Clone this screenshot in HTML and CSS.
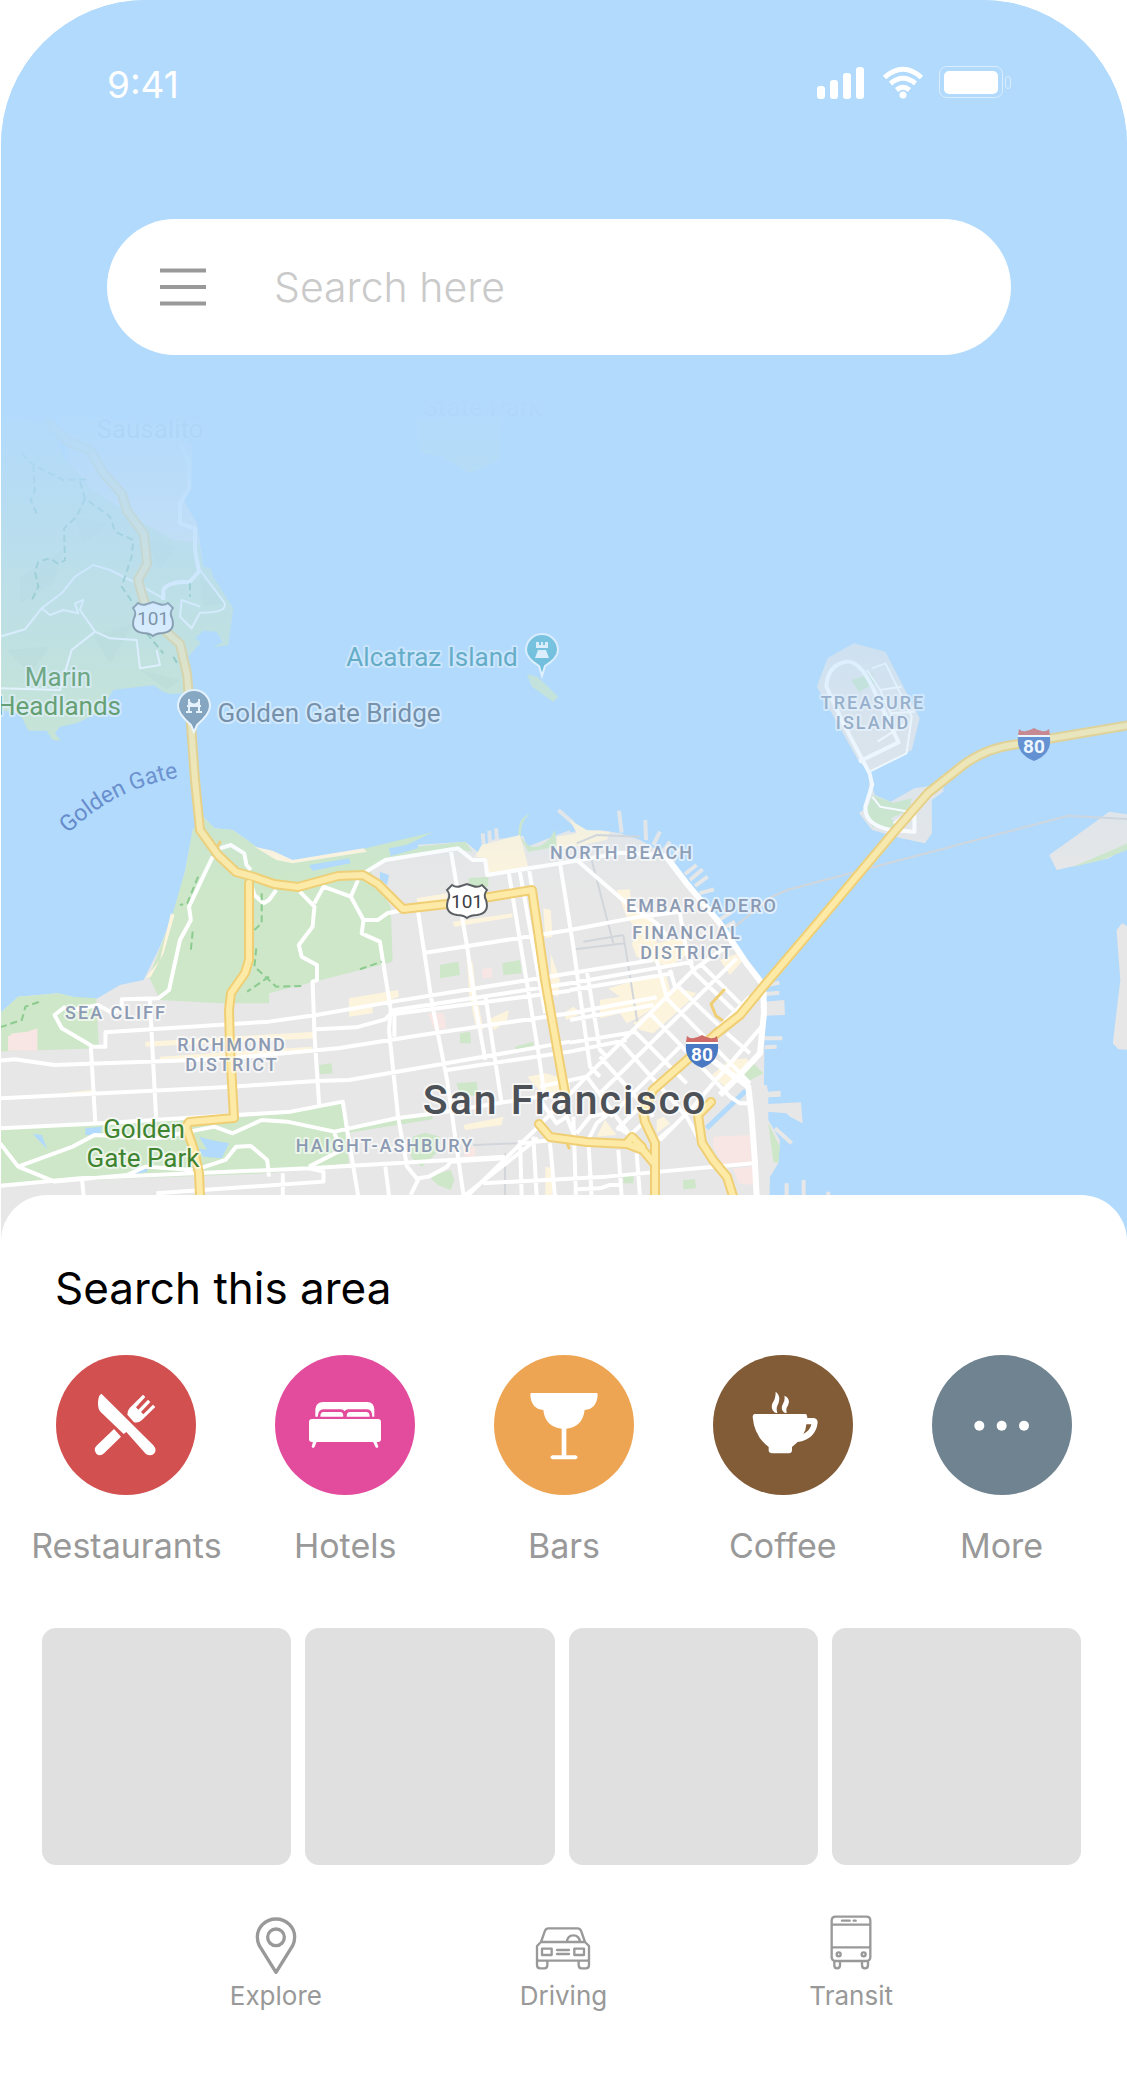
FILE: index.html
```html
<!DOCTYPE html>
<html lang="en">
<head>
<meta charset="utf-8">
<meta name="viewport" content="width=device-width, initial-scale=1">
<title>Maps</title>
<link rel="stylesheet" href="styles.css">
</head>
<body>
<main class="phone">
  <section class="stage">
    <svg class="map" viewBox="1 0 1126 1245" role="img" aria-label="Map of San Francisco">
      <defs>
        <linearGradient id="haze" x1="0" y1="0" x2="0" y2="1">
          <stop offset="0" stop-color="#b2dafc"/>
          <stop offset=".1" stop-color="#b2dafc" stop-opacity=".93"/>
          <stop offset=".42" stop-color="#b2dafc" stop-opacity=".58"/>
          <stop offset=".65" stop-color="#b2dafc" stop-opacity=".3"/>
          <stop offset="1" stop-color="#b2dafc" stop-opacity="0"/>
        </linearGradient>
        <symbol id="us-route" viewBox="-22 -18 44 36" overflow="visible">
          <path d="M-15-15Q-11-12-6-14L0-16L6-14Q11-12 15-15L20-10Q16-5 19 0Q23 13 10 15Q4 15 0 18Q-4 15-10 15Q-23 13-19 0Q-16-5-20-10Z" fill="#fff" stroke="#5b5f63" stroke-width="2"/>
        </symbol>
        <symbol id="interstate" viewBox="-18 -18 36 36" overflow="visible">
          <path d="M-15-16Q-12-13-8-14Q-3-15 0-17Q3-15 8-14Q12-13 15-16L16-10H-16Z" fill="#cf6b69"/>
          <path d="M-16-8H16Q18 9 0 16Q-18 9-16-8Z" fill="#4a79c4"/>
          <path d="M-16-10H16V-8H-16Z" fill="#fff"/>
        </symbol>
        <path id="strait" d="M68 834Q112 790 176 778L220 770"/>
      </defs>

      <!-- land -->
      <g class="land">
        <path transform="translate(0 780) scale(.3635 .3333)" d="M0 700L50 650L160 640L200 650L260 660L330 615L395 600L440 500L480 390L510 270L530 150L560 110L590 145L640 150L680 180L710 205L800 245L930 225L1010 210L1140 195L1280 185L1330 230L1345 180L1440 168L1450 200L1568 150V1400H0Z"/>
        <path transform="translate(440 800) scale(.3333)" d="M270 150L350 105L400 95L480 90L540 100L600 120L680 165L720 220L830 370L880 440L960 540L975 560L972 850L985 960L1020 1020L1015 1090L990 1130L985 1340H270ZM972 605L1033 600L1035 645L972 647ZM930 858L980 855L985 875L1022 872V890L985 892V912L1083 907L1088 970L1050 950L1040 940L985 935V990H930Z"/>
        <path transform="translate(300 580) scale(.5274 .3333)" d="M1050 190L1110 215L1175 415L1160 510L1080 575L1060 545L980 320L1000 235ZM1080 600L1090 645L1120 665L1165 625L1220 612V635L1198 660V760L1185 790L1140 775L1085 750L1060 700L1075 680Z"/>
        <path transform="translate(540 780) scale(.3744 .3333)" d="M1520 95L1580 105V190L1520 235L1380 270L1360 225L1460 145ZM1555 430L1580 445V810L1545 808L1530 790L1550 600L1540 450Z"/>
        <path d="M60 420L175 430L193 450L190 490L184 505L197 527L203 567L130 540L70 470Z" transform="translate(0 -4)"/>
      </g>
      <g class="piers" transform="translate(440 800) scale(.3333)">
        <path d="M355 30L400 70M537 32L545 98M616 60L618 120M660 95L640 135M690 125L668 155M715 145L700 185M735 222L770 195M750 240L788 208M765 258L803 230M778 280L822 268M830 365L872 338M850 385L885 365M960 560L1018 548M970 583L1018 578M970 715H1027M975 742L1010 740M1005 985L1055 1030M1091 1140V1195M1040 1150V1195M128 100L132 140M148 92L150 140M168 85L172 130M1165 1175V1195"/>
      </g>

      <!-- parks and open space -->
      <g class="park">
        <path transform="translate(0 390) scale(.3333)" d="M0 80L150 100L190 200L280 300L430 400L520 450L597 460L610 530L632 535L640 560L700 655L685 765L640 772L668 755L650 725L610 722L585 745L603 757L565 800L575 840L555 910L510 912L490 905L460 885L340 900L300 965L230 1000L180 1010L165 1030L182 1052L158 1050L140 1022L85 1022L60 970L0 960ZM1250 90L1500 70V210L1410 250L1330 200L1260 190Z"/>
        <path transform="translate(0 780) scale(.3635 .3333)" d="M560 110L590 145L640 150L680 180L710 205L800 245L930 225L1080 185L1190 157L1100 205L1280 185L1300 215L1250 205L1060 240L1020 275L1075 380L1080 545L740 640V670H610L440 660L410 590L470 420L510 270L530 150ZM0 700L50 650L160 640L200 650L265 655L272 805L0 815ZM0 1047L300 1030L640 1015L780 1000L940 968L960 1150L740 1180L0 1210ZM950 1045L1190 1000V1018L950 1060ZM1135 1070L1170 1058L1210 1070L1200 1120L1160 1160L1130 1130ZM1180 1190L1240 1170L1250 1200L1240 1230L1205 1215ZM878 855L912 850L915 880L880 883Z"/>
        <path transform="translate(440 800) scale(.3333)" d="M265 155L235 105Q235 50 270 43Q242 60 242 110Q280 170 330 115L345 90L350 140ZM0 495L55 485L60 525L0 535ZM187 490L240 480L245 520L190 525ZM60 700L90 695L93 730H60ZM225 740L280 725V745L225 748ZM50 850L110 845L115 885L60 890ZM85 235L145 230V260L90 262ZM730 1140L765 1138L768 1165L730 1168ZM550 1130L580 1125V1150H550ZM905 830L940 790L970 820L920 845ZM985 970L1000 1000L1020 1040L1015 1090L1000 1085Z"/>
        <path transform="translate(300 580) scale(.5274 .3333)" d="M1045 300L1085 280L1090 310L1060 335ZM1085 645L1125 668L1160 655L1155 690L1120 715L1140 745L1085 740L1075 690ZM430 282L450 290L490 350L480 365L440 320Z"/>
        <path transform="translate(540 780) scale(.3744 .3333)" d="M1568 190L1540 205L1420 262L1500 240L1568 210Z"/>
      </g>
      <g class="relief" transform="translate(0 390) scale(.3333)">
        <path d="M60 560L190 480L160 580L60 640ZM280 740L400 700L330 820ZM430 440L530 470L480 540ZM220 380L330 400L250 460ZM20 780L150 770L90 850ZM420 840L540 870L500 900ZM600 560L680 640L610 650Z"/>
      </g>
      <path class="lake" transform="translate(0 780) scale(.3635 .3333)" d="M850 255L960 235L965 250L860 272ZM1070 205L1150 188V205L1075 228ZM1045 275L1070 285L1065 315L1045 300ZM90 1062L115 1065L130 1108ZM235 1045L280 1040L275 1065H235ZM548 1070L580 1080L630 1090L610 1135L560 1130L545 1105L570 1110ZM370 1165L405 1155V1175L370 1182Z"/>
      <path class="lake-line" transform="translate(440 800) scale(.3333)" d="M800 985L918 872"/>

      <!-- shopping streets, beaches, hospitals -->
      <g class="commerce">
        <path transform="translate(0 780) scale(.3635 .3333)" d="M400 595L440 540L470 400L480 405L450 520L415 590ZM700 200L750 212L805 240L1000 205L1010 215L805 250L760 240ZM400 785L870 755V775L400 800ZM440 830L860 800V815L440 845ZM960 655L1095 630L1097 650L1025 680V700L960 710ZM1145 355L1230 340V360L1150 370ZM1245 425L1410 400V412L1250 440ZM1285 540L1300 545L1310 640L1330 750L1310 745L1290 640ZM1340 720L1400 690L1395 720L1360 750ZM1495 385L1515 390L1520 470L1500 475ZM1515 520L1540 600L1535 650L1515 640ZM1275 1035L1385 1010L1380 1035L1280 1050ZM1450 890L1500 880L1568 900V960L1500 950ZM1500 1160L1520 1165V1245H1500ZM185 938L250 930V942L185 948Z"/>
        <path transform="translate(440 800) scale(.3333)" d="M125 135L240 105L250 140L265 205L145 225L140 175L105 170ZM350 110L410 100L390 60L440 90L510 95L500 120L350 150ZM530 270L570 268L575 330L640 350L650 430L740 410L745 460L690 500L590 470L575 430L600 400L560 350ZM505 565L590 540L680 530L695 590L600 650L560 670L540 640L480 655V600L540 590ZM700 560L770 580L740 610L640 700L600 690L580 670L680 600ZM840 480L890 462L905 485L870 525ZM815 825L870 780L920 775L930 795L855 860ZM370 640L400 620L425 640L380 660ZM470 1010L495 960L530 1005ZM650 960L670 950L690 970L650 1000Z"/>
      </g>
      <g class="hospital">
        <path transform="translate(0 780) scale(.3635 .3333)" d="M22 770L35 760L75 755L103 745V812H22ZM1325 568L1352 562L1355 592L1328 595ZM1178 700L1220 698L1228 745L1195 750ZM1275 1105L1308 1100L1308 1130L1278 1132Z"/>
        <path transform="translate(440 800) scale(.3333)" d="M820 1010L930 1005L935 1090L850 1095L820 1040ZM880 1105L940 1100V1155L895 1150Z"/>
      </g>
      <g class="rail">
        <path transform="translate(440 800) scale(.3333)" d="M455 180L520 430M550 405L592 665M430 425L550 405M405 448L555 430M410 130L470 105L600 110M100 1035L230 1030M195 1060V1190"/>
        <path transform="translate(540 780) scale(.3744 .3333)" d="M520 440L620 350L660 330L1350 125L1410 107L1580 118"/>
      </g>

      <!-- streets -->
      <g class="street" transform="translate(0 780) scale(.3635 .3333)">
        <path d="M0 842L40 838L150 855L480 842L630 835L930 805L1160 765L1568 700M0 955L640 920L870 903L960 900L1200 855L1568 785M0 1045L280 1030L500 1015L650 1005L800 995L943 965L955 1050L985 1245M180 680L150 705L170 745L240 790L255 800H290V757L740 725L870 705L1080 665L1568 580M250 800L262 1025M412 655L430 1025M200 690L270 675L310 700L335 685V658L435 655L465 630L495 480L525 420L520 380L550 310L585 230M605 205L635 195L672 220L678 255L690 270M690 310L700 345L725 370L740 360L760 330M825 335L865 380L860 440L822 495L830 530L872 555V600L860 605L865 760L878 975M865 370L890 320L965 350L985 300M965 350L1000 420L995 460L1045 485L1075 690L1070 750L1095 1010L1120 1160L1150 1200L1130 1245M1000 420L1040 420L1065 400L1110 390M985 290L1060 240L1260 205L1300 240H1335L1340 285L1568 245M1240 210L1285 500L1310 690L1335 840M1150 395L1190 680L1230 900L1275 1245M1170 518L1568 450M870 748L980 742L1060 718L1085 690L1568 610M1080 703L1568 632M0 1218L220 1195L850 1165L1390 1130M225 1190L230 1245M520 1055L590 1040L640 1060L720 1020L790 1025L920 1055L1090 1015L1200 1000L1568 935M0 1090L50 1160L150 1205L350 1185L400 1160L530 1170M50 1160L200 1100L260 1065L430 1075L520 1055M550 1165L620 1140L650 1100L690 1098L735 1140L740 1190M850 1160L940 1110L920 1060M850 1165L890 1175V1205L430 1240M1280 1245L1480 1075M1335 645L1380 970M1400 280L1480 810L1500 960M1430 275L1500 700M1455 265L1500 560M1230 870L1568 815M1060 1160L1070 1245M778 1180V1245M1150 1195L1180 1190L1230 1160L1240 1145L1390 1135M1085 690V770"/>
      </g>
      <g class="street" transform="translate(440 800) scale(.3333)">
        <path d="M390 185L420 180L540 158L680 165M410 180L560 310L650 370L690 420M390 390L600 350L720 335M390 520L640 480M390 550L760 485M390 570L700 520M390 640L650 592M390 660L640 615M390 728L580 697M390 755L560 720M300 860L440 830M360 190L400 440L450 800L480 830M440 510L480 750L500 770M720 340L740 460L760 510M650 480L680 590M690 510L705 560M80 1190L295 980L440 830L580 690L760 510L860 440M475 885L890 475M510 950L720 740M530 990L930 590M660 1020L760 920L965 680M440 830L570 1005M480 770L640 950M540 725L740 950L800 1060M580 690L740 850M630 640L870 890L900 910H930M680 595L930 850M715 560L840 680M755 510L880 630M785 495L900 610M860 700L930 760M240 1020L245 1190M280 1010L290 1190M330 1030L345 1190M400 950L408 1190M445 1020L455 1190M535 1050L545 1190M590 1060L600 1190M240 1030L340 1020M130 1150L500 1130L660 1115L940 1090M410 1168L480 1165L510 1155H540M300 900L350 970L380 950L400 1000M410 1000L450 950L500 940M440 1030L470 970L520 930M530 980L570 1005L620 960M640 1030L700 980"/>
        <path class="wide" d="M675 165L740 250L840 370L920 490L970 555L972 640L960 760L890 835L840 885M790 760L925 860L935 950L945 1090L950 1190"/>
      </g>
      <g class="street thin" transform="translate(0 390) scale(.3333)">
        <path d="M0 740L75 718L125 655L185 610L225 560L280 525L330 540L410 580L490 625M125 655L150 675L190 660L235 670L225 640L250 630L240 660L275 710L285 725L330 745L410 750L420 835L480 825L470 780M285 725L215 780L200 830L180 900L0 895M600 540L675 640Q680 670 600 668L575 715L540 680L545 630L600 650"/>
        <path class="mid" d="M490 630L490 600Q500 575 570 575L597 545L585 480L585 415L540 400V340L568 295V215L540 160"/>
      </g>
      <g class="street thin" transform="translate(300 580) scale(.5274 .3333)">
        <path d="M1085 265L1110 250L1160 410L1150 520L1080 575M1075 270L1100 330L1140 320M1100 330L1120 400L1165 395M1095 485L1150 430M1085 650L1100 680L1155 695L1125 730"/>
        <path class="mid" d="M1060 545L1135 487L1085 320Q1060 240 1035 245Q1000 255 998 320L1030 430L1080 580L1085 615L1072 680Q1070 735 1120 750L1165 755V700"/>
      </g>
      <g class="trail" transform="translate(0 390) scale(.3333)">
        <path d="M65 190L100 225L190 270L265 268M100 225L105 300L92 330L112 375M240 275L255 325L330 380L345 425L400 450L395 500L365 590L400 640M255 325L230 380L192 415L195 510L175 522L150 505L115 515L105 545L115 590L95 632M440 730L490 790M520 800L535 825M570 580V620"/>
      </g>
      <g class="trail green" transform="translate(0 780) scale(.3635 .3333)">
        <path d="M545 290L515 370L495 375M530 455L525 510M720 340V430L690 460M705 505L700 560L760 620L830 618M740 590L680 635M0 742L60 720L70 680L110 665M990 568L1050 545"/>
      </g>

      <!-- highways: casing, then surface -->
      <g id="highways">
        <g class="casing">
          <path id="hw-101" d="M50 424L67 441L90 450L104 474L122 494L127 511L144 534L147 564L138 580L144 601L153 620L180 644L187 674L190 710L195 780L200 830L218 855L236 872L254 877L274 884L298 887L338 876L363 875L378 884L403 909L447 904L532 890L545 980L565 1093"/>
          <path id="hw-park" d="M249 883V960L245 973L231 993L229 1010L230 1047L234 1118L189 1122L186 1127L194 1150L199 1173L200 1196"/>
          <path id="hw-80" d="M655 1196V1143L645 1122L643 1112L653 1090L687 1060L717 1033L740 1015L763 987L820 920L894 832L928 793L962 766Q984 749 1012 745L1130 725"/>
          <path id="hw-central" d="M539 1124L550 1137L587 1142L627 1144L643 1150L653 1162M627 1143L632 1137L642 1147"/>
          <path id="hw-280" d="M711 1102L698 1115L702 1143L713 1160L727 1177L733 1196"/>
          <path class="ramp" d="M724 990L711 1004L716 1016L722 1020M217 848L220 842M565 1138L569 1148"/>
        </g>
        <g class="surface">
          <use href="#hw-101"/><use href="#hw-park"/><use href="#hw-80"/><use href="#hw-central"/><use href="#hw-280"/>
        </g>
      </g>

      <!-- markers -->
      <path d="M194 732L191 725Q178 714 178 706A16 16 0 0 1 210 706Q210 714 197 725Z" fill="#6f8ca3" stroke="#fff" stroke-width="2"/>
      <path d="M186 712H192M196 712H202M189 699V712M199 699V712M187 706H201M189 702Q194 707 199 702" fill="none" stroke="#fff" stroke-width="2"/>
      <path d="M542 676L539 666Q526 658 526 650A16 16 0 0 1 558 650Q558 658 545 666Z" fill="#3fabc4" stroke="#fff" stroke-width="2"/>
      <path d="M536 642H539V645H541V642H543V645H545V642H548V648H536ZM538 650H546L549 658H535Z" fill="#fff"/>
      <use href="#us-route" x="131" y="600" width="44" height="36"/>
      <use href="#us-route" x="445" y="882" width="44" height="36"/>
      <use href="#interstate" x="684" y="1034" width="36" height="36"/>
      <use href="#interstate" x="1016" y="727" width="36" height="36"/>
      <g class="shield">
        <text x="153" y="625">101</text>
        <text x="467" y="908">101</text>
        <text class="on-blue" x="702" y="1061">80</text>
        <text class="on-blue" x="1034" y="753">80</text>
      </g>

      <!-- place names -->
      <g class="place">
        <text class="town" x="150" y="438">Sausalito</text>
        <text class="town" x="482" y="416">State Park</text>
        <text class="nature" x="58" y="686">Marin</text>
        <text class="nature" x="59" y="715">Headlands</text>
        <text class="sight" x="432" y="666">Alcatraz Island</text>
        <text class="bridge" x="329" y="722">Golden Gate Bridge</text>
        <text class="water"><textPath href="#strait">Golden Gate</textPath></text>
        <text class="nature" x="144" y="1138">Golden</text>
        <text class="nature" x="143" y="1167">Gate Park</text>
      </g>
      <g class="district">
        <text x="873" y="709">TREASURE</text>
        <text x="873" y="729">ISLAND</text>
        <text x="622" y="859">NORTH BEACH</text>
        <text x="702" y="912">EMBARCADERO</text>
        <text x="687" y="939">FINANCIAL</text>
        <text x="687" y="959">DISTRICT</text>
        <text x="116" y="1019">SEA CLIFF</text>
        <text x="232" y="1051">RICHMOND</text>
        <text x="232" y="1071">DISTRICT</text>
        <text x="385" y="1152">HAIGHT-ASHBURY</text>
      </g>
      <text class="city" x="565" y="1114">San Francisco</text>
      <rect x="0" y="0" width="1128" height="395" fill="#b2dafc"/>
      <rect x="0" y="394" width="1128" height="500" fill="url(#haze)"/>
    </svg>

    <header class="top">
      <div class="status">
        <time class="clock">9:41</time>
        <svg class="signals" viewBox="0 0 200 36" aria-hidden="true">
          <g fill="#fff">
            <rect x="3" y="21" width="8" height="13" rx="3"/><rect x="16" y="15" width="8" height="19" rx="3"/><rect x="29" y="8" width="8" height="26" rx="3"/><rect x="42" y="2" width="8" height="32" rx="3"/>
            <circle cx="89" cy="30" r="3.5"/><rect x="130" y="6" width="54" height="23" rx="5"/>
          </g>
          <g fill="none" stroke="#fff" stroke-width="5">
            <path d="M70.500 12.500Q89-4 107.500 12.500M76.500 18.500Q89 8 101.500 18.500M82.500 25Q89 19.500 95.500 25"/>
          </g>
          <g fill="none" stroke="#fff" stroke-opacity=".5"><rect x="125.500" y="1.500" width="63" height="31" rx="7"/><rect x="191.500" y="11.500" width="5" height="12" rx="2.500"/></g>
        </svg>
      </div>
      <form class="search">
        <button class="menu" type="button" aria-label="Menu">
          <svg viewBox="0 0 46 38" aria-hidden="true"><path d="M0 2.500H46M0 19H46M0 35.500H46" stroke="#999" stroke-width="4"/></svg>
        </button>
        <input class="query" type="search" placeholder="Search here" aria-label="Search here">
      </form>
    </header>
  </section>

  <section class="sheet">
    <h1 class="title">Search this area</h1>
    <div class="categories">
      <button class="category" type="button">
        <svg class="disc red" viewBox="-12 15 420 420" aria-hidden="true"><path d="M114 155Q116 132 125 132L280 286Q292 300 282 311Q270 321 257 311L199 246L191 252L122 186Q113 178 114 155ZM162 237L183 260L133 309Q120 321 109 311Q98 297 111 286ZM249 134L256 141L228 172L235 179L264 149L271 156L243 186L250 193L279 164L286 171L246 210Q236 220 222 217L202 194Q202 182 209 174Z"/></svg>
        <span>Restaurants</span>
      </button>
      <button class="category" type="button">
        <svg class="disc pink" viewBox="653 15 420 420" aria-hidden="true"><path d="M774 200V178Q776 157 797 156H930Q950 157 951 178V200H945Q944 178 930 178H873Q865 178 862 184Q859 178 850 178H798Q783 178 781 200ZM789 200Q789 186 798 186H850Q858 187 858 200ZM868 200Q868 187 876 186H928Q937 187 937 200ZM767 275H778L772 290Q767 297 763 290ZM947 275H958L963 290Q959 297 954 290Z"/><rect x="755" y="207" width="216" height="69" rx="9"/></svg>
        <span>Hotels</span>
      </button>
      <button class="category" type="button">
        <svg class="disc orange" viewBox="1313 15 420 420" aria-hidden="true"><path d="M1425 129H1621Q1624 130 1624 134Q1622 176 1585 180Q1578 232 1530 236V316H1558Q1570 322 1558 328H1488Q1476 322 1488 316H1516V236Q1466 230 1461 180Q1424 176 1422 134Q1422 130 1425 129Z"/></svg>
        <span>Bars</span>
      </button>
      <button class="category" type="button">
        <svg class="disc brown" viewBox="0 0 420 420" aria-hidden="true"><path fill-rule="evenodd" d="M124 177H278Q282 178 283 189H302Q314 191 314 203Q308 252 254 261L237 276V288Q235 295 228 295H176Q168 294 167 288V276Q124 244 119 186Q119 178 124 177ZM280 208H295Q292 226 271 237Q279 226 280 208ZM188 110Q199 118 199 132Q198 144 193 152Q189 162 193 173Q186 176 179 166Q173 152 180 142Q188 130 188 110ZM214 122Q227 126 228 140Q227 150 221 158Q219 166 221 173Q213 176 208 166Q204 156 210 146Q217 136 214 122Z"/></svg>
        <span>Coffee</span>
      </button>
      <button class="category" type="button">
        <svg class="disc slate" viewBox="0 0 420 420" aria-hidden="true"><circle cx="142" cy="212" r="15"/><circle cx="209" cy="212" r="15"/><circle cx="276" cy="212" r="15"/></svg>
        <span>More</span>
      </button>
    </div>

    <div class="cards">
      <div class="card"></div>
      <div class="card"></div>
      <div class="card"></div>
      <div class="card"></div>
    </div>

    <nav class="tabs">
      <a class="tab" href="#explore">
        <svg viewBox="48 45 180 180" aria-hidden="true"><g stroke-width="10"><path d="M138 217L88 137Q82 125 82 111A56 54 0 0 1 194 111Q194 125 188 137Z"/><circle cx="138" cy="112" r="25"/></g></svg>
        <span>Explore</span>
      </a>
      <a class="tab" href="#driving">
        <svg viewBox="906 45 180 180" aria-hidden="true"><g stroke-width="7"><path d="M930 126L942 92Q945 85 952 85H1040Q1047 85 1050 92L1062 126M930 126H1062L1074 138V176Q1074 182 1067 182H925Q918 182 918 176V138ZM918 178V196Q918 205 928 205H940Q949 205 949 196V183M1074 178V196Q1074 205 1064 205H1052Q1043 205 1043 196V183M1008 126Q1009 106 1027 106Q1045 106 1047 126M933 146H962V165H933ZM1030 146H1059V165H1030ZM978 150H1014M978 162H1014"/></g></svg>
        <span>Driving</span>
      </a>
      <a class="tab" href="#transit">
        <svg viewBox="0 0 180 180" aria-hidden="true"><g stroke-width="7"><path d="M44 5H136Q148 5 148 17V126Q148 138 136 138H44Q32 138 32 126V17Q32 5 44 5ZM32 29H148M32 97H148M40 138V151Q40 160 48 160Q57 160 57 151V138M123 138V151Q123 160 132 160Q141 160 141 151V138M63 17H86M98 17H104"/><circle cx="53" cy="118" r="6"/><circle cx="128" cy="118" r="6"/></g></svg>
        <span>Transit</span>
      </a>
    </nav>
  </section>
</main>
</body>
</html>
```
FILE: styles.css
```css
* { box-sizing: border-box; }

body {
  margin: 0;
  background: #fff;
  font-family: Inter, "Liberation Sans", sans-serif;
}

button, input { font: inherit; border: 0; background: none; padding: 0; margin: 0; }

.phone { padding-left: 1px; }

.stage {
  display: grid;
  overflow: hidden;
  border-radius: 145px 145px 0 0;
  background: #b2dafc;
}
.map, .top { grid-area: 1 / 1; }
.map { display: block; width: 100%; height: auto; }
.map text { font-family: Roboto, "Liberation Sans", sans-serif; text-anchor: middle; }

.land { fill: #e7e7e7; }
.park { fill: #cde7c8; }
.relief { fill: #bfdcc0; opacity: .5; }
.lake { fill: #b2dafc; }
.commerce { fill: #fdf4dd; }
.hospital { fill: #f8e6e4; }
.map path { vector-effect: non-scaling-stroke; }
.piers { fill: none; stroke: #e7e7e7; stroke-width: 4; }
.lake-line { fill: none; stroke: #b2dafc; stroke-width: 5; }
.rail { fill: none; stroke: #d2d6da; stroke-width: 2; }
.street { fill: none; stroke: #fff; stroke-width: 4; stroke-linejoin: round; }
.street .wide { stroke-width: 6; }
.thin { stroke-width: 2; }
.thin .mid { stroke-width: 4; }
.trail { fill: none; stroke: #7dbd9a; stroke-width: 2; stroke-dasharray: 7 4; }
.trail.green { stroke: #8ccb8f; }
.casing, .surface { fill: none; stroke-linecap: round; stroke-linejoin: round; }
.casing { stroke: #f0cf74; stroke-width: 10; }
.casing .ramp { stroke-width: 3; }
.surface use { stroke: #fdeaa6; stroke-width: 6; }
#hw-101, #hw-park, #hw-80, #hw-central, #hw-280 { stroke-width: inherit; }

.place text, .district text, .city { paint-order: stroke; stroke: rgba(255, 255, 255, .6); stroke-width: 4; stroke-linejoin: round; }
.place { font-size: 26px; }
.town { fill: #6f7f96; }
.nature { fill: #3f8430; }
.sight { fill: #24889c; }
.bridge { fill: #5a6f86; }
.place .water { font-size: 23px; fill: #5a80c4; stroke: none; text-anchor: start; }
.district { font-size: 18px; font-weight: 500; fill: #8b9ab2; letter-spacing: 2px; }
.city { font-size: 41px; font-weight: 500; fill: #4c5157; letter-spacing: 2px; }
.shield { font-size: 19px; fill: #3c4043; }
.shield .on-blue { fill: #fff; font-weight: 700; }

.top { padding: 60px 116px 0 106px; }
.status { display: flex; justify-content: space-between; align-items: center; height: 50px; margin-right: -3px; color: #fff; }
.clock { font-size: 37px; font-weight: 400; line-height: 50px; }
.signals { width: 200px; height: 36px; margin-bottom: 4px; }

.search {
  display: flex;
  align-items: center;
  gap: 68px;
  height: 136px;
  margin-top: 109px;
  padding: 0 53px;
  border-radius: 68px;
  background: #fff;
}
.menu { width: 46px; height: 38px; }
.menu svg { display: block; width: 46px; height: 38px; }
.query { flex: 1; min-width: 0; font-size: 41px; font-weight: 300; color: #555; outline: 0; appearance: none; }
.query::placeholder { color: #cacaca; opacity: 1; }

.sheet {
  position: relative;
  margin-top: -50px;
  padding-top: 63px;
  border-radius: 46px 46px 0 0;
  background: #fff;
}
.title { margin: 0 0 37px; padding-left: 54px; font-size: 44px; font-weight: 400; line-height: 60px; color: #000; }

.categories { display: grid; grid-template-columns: repeat(5, 1fr); padding: 0 16px; }
.category { display: flex; flex-direction: column; align-items: center; gap: 28px; font-size: 34px; line-height: 46px; color: #999; cursor: pointer; }
.disc { width: 140px; height: 140px; border-radius: 50%; fill: #fff; }
.red { background: #d25050; }
.pink { background: #e34c9d; }
.orange { background: #eea553; }
.brown { background: #825b37; }
.slate { background: #708390; }

.cards { display: grid; grid-template-columns: repeat(4, 1fr); gap: 14px; margin-top: 59px; padding: 0 46px 0 41px; }
.card { height: 237px; border-radius: 14px; background: #e0e0e0; }

.tabs { display: grid; grid-template-columns: repeat(3, 1fr); margin-top: 50px; padding: 0 132px 0 131px; }
.tab { display: flex; flex-direction: column; align-items: center; gap: 4px; padding-bottom: 60px; font-size: 26px; line-height: 34px; color: #999; text-decoration: none; }
.tab svg { width: 60px; height: 60px; fill: none; stroke: #999; stroke-linejoin: round; stroke-linecap: round; }
```
